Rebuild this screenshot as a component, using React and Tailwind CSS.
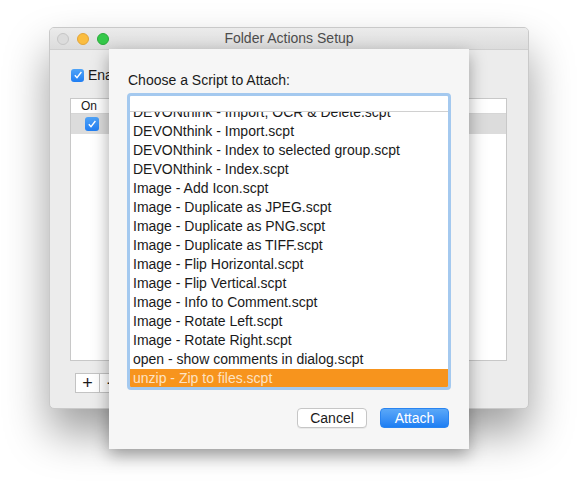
import React from "react";

const scripts = [
  "DEVONthink - Import, OCR & Delete.scpt",
  "DEVONthink - Import.scpt",
  "DEVONthink - Index to selected group.scpt",
  "DEVONthink - Index.scpt",
  "Image - Add Icon.scpt",
  "Image - Duplicate as JPEG.scpt",
  "Image - Duplicate as PNG.scpt",
  "Image - Duplicate as TIFF.scpt",
  "Image - Flip Horizontal.scpt",
  "Image - Flip Vertical.scpt",
  "Image - Info to Comment.scpt",
  "Image - Rotate Left.scpt",
  "Image - Rotate Right.scpt",
  "open - show comments in dialog.scpt",
  "unzip - Zip to files.scpt",
];

const Check = ({ className }) => (
  <span
    className={
      "flex items-center justify-center rounded-[3px] bg-gradient-to-b from-[#4fa3f7] to-[#1f7ef3] " +
      className
    }
  >
    <svg width="10" height="10" viewBox="0 0 10 10">
      <path d="M1.8 5.2 L4 7.6 L8.4 2" fill="none" stroke="#fff" strokeWidth="1.4" />
    </svg>
  </span>
);

const App = () => {
  return (
    <div
      className="relative w-[577px] h-[483px] bg-white overflow-hidden text-[14px] text-[#1a1a1a]"
      style={{ fontFamily: '"Liberation Sans", Arial, sans-serif' }}
    >
      {/* main window */}
      <div className="absolute left-[49px] top-[27px] w-[480px] h-[382px] rounded-[5px] bg-[#ececec] border border-[#c9c9c9] shadow-[0_24px_44px_rgba(0,0,0,0.38)] overflow-hidden flex flex-col">
        <div className="relative h-[22px] shrink-0 flex items-center justify-center bg-gradient-to-b from-[#ebebeb] to-[#dcdcdc] border-b border-[#cfcfcf]">
          <div className="absolute left-[7px] top-[5px] flex gap-[8px]">
            <span className="w-[12px] h-[12px] rounded-full bg-[#dcdcdc] border border-[#c6c6c6]" />
            <span className="w-[12px] h-[12px] rounded-full bg-[#fbbd3f] border border-[#e2a53a]" />
            <span className="w-[12px] h-[12px] rounded-full bg-[#35c94a] border border-[#2aab3b]" />
          </div>
          <span className="text-[#4d4d4d]">Folder Actions Setup</span>
        </div>
        <div className="flex-1 flex flex-col pl-[20px] pr-[21px]">
          <div className="flex items-center gap-[4px] mt-[17px] ml-[1px] h-[16px]">
            <Check className="w-[13px] h-[13px]" />
            <span>Enable Folder Actions</span>
          </div>
          <div className="mt-[15px] h-[263px] shrink-0 bg-white border border-[#c8c8c8] flex flex-col">
            <div className="h-[15px] border-b border-[#d6d6d6] flex items-center text-[12px]">
              <span className="w-[36px] text-center">On</span>
            </div>
            <div className="h-[20px] bg-[#dcdcdc] flex items-center">
              <Check className="w-[14px] h-[14px] ml-[14px]" />
            </div>
          </div>
          <div className="mt-[12px] ml-[5px] flex">
            <div className="w-[25px] h-[20px] bg-white border border-[#c3c3c3] flex items-center justify-center text-[18px] font-light leading-none">
              +
            </div>
            <div className="w-[25px] h-[20px] bg-white border border-l-0 border-[#c3c3c3] flex items-center justify-center text-[18px] leading-none">
              −
            </div>
          </div>
        </div>
      </div>

      {/* sheet */}
      <div className="absolute left-[109px] top-[49px] w-[360px] h-[400px] bg-[#f6f6f6] shadow-[0_6px_16px_rgba(0,0,0,0.35)] flex flex-col">
        <div className="pl-[19px] mt-[23px] leading-[17px]">Choose a Script to Attach:</div>
        <div className="ml-[18px] mt-[4px] w-[324px] h-[297px] rounded-[4px] border-[3px] border-[#a4c9ef] bg-white flex flex-col overflow-hidden">
          <div className="h-[16px] border-b border-[#d0d0d0] shrink-0" />
          <div className="flex-1 overflow-hidden">
            <div className="-mt-[9px]">
              {scripts.map((s, i) => (
                <div
                  key={i}
                  className={
                    "h-[19px] leading-[19px] pl-[3px] whitespace-nowrap " +
                    (i === scripts.length - 1 ? "bg-[#f7941d] text-[#fde3c4]" : "")
                  }
                >
                  {s}
                </div>
              ))}
            </div>
          </div>
        </div>
        <div className="mt-[18px] mr-[20px] flex justify-end gap-[13px]">
          <button className="w-[70px] h-[20px] rounded-[4px] bg-white border border-[#c6c6c6] text-[14px] leading-none shadow-[0_1px_0_rgba(0,0,0,0.05)]">
            Cancel
          </button>
          <button className="w-[69px] h-[20px] rounded-[4px] bg-gradient-to-b from-[#5aa8f8] to-[#1c7ef3] border border-[#2a84f0] text-white text-[14px] leading-none">
            Attach
          </button>
        </div>
      </div>
    </div>
  );
};

export default App;
